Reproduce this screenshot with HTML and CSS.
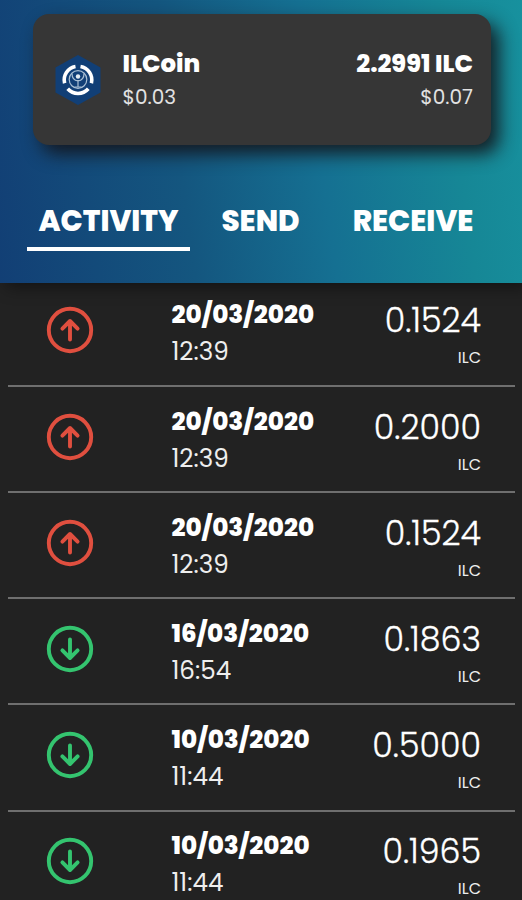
FILE: index.html
```html
<!DOCTYPE html>
<html lang="en">

<head>
    <meta charset="UTF-8">
    <meta name="viewport" content="width=device-width, initial-scale=1">
    <title>ILCoin Wallet</title>
    <link rel="stylesheet" href="styles.css">
</head>

<body>
    <!-- arrow icons shared by the rows -->
    <svg class="sprite" width="0" height="0">
        <symbol id="arrow-up" viewBox="0 0 48 48">
            <circle cx="24" cy="24" r="21.2" />
            <path d="M24 33.6V15.5M16.4 22.6L24 15L31.6 22.6" />
        </symbol>
        <symbol id="arrow-down" viewBox="0 0 48 48">
            <circle cx="24" cy="24" r="21.2" />
            <path d="M24 14.4V32.5M16.4 25.4L24 33L31.6 25.4" />
        </symbol>
    </svg>

    <header class="header">
        <div class="card">
            <svg class="coin-logo" viewBox="0 0 46 50">
                <path class="coin-hex" d="M23 0L45.5 12.5V37.5L23 50L.5 37.5V12.5Z" />
                <g class="coin-ring">
                    <path d="M9.6 28.3A13.6 13.6 0 0 1 20.5 11.6" />
                    <path d="M25.5 11.6A13.6 13.6 0 0 1 36.4 28.3" />
                    <path d="M12.7 33.8A13.6 13.6 0 0 0 33.3 33.8" />
                </g>
                <circle class="coin-line" cx="23" cy="24.5" r="8.8" />
                <circle class="coin-dot" cx="23" cy="21.5" r="2.2" />
                <path class="coin-line" d="M17 18.5C17 23 19.5 25.5 23 26C26.5 25.5 29 23 29 18.5M23 25V32M19.5 32H26.5" />
            </svg>
            <div class="coin">
                <div class="coin-name">ILCoin</div>
                <div class="coin-price">$0.03</div>
            </div>
            <div class="balance">
                <div class="coin-name">2.2991 ILC</div>
                <div class="coin-price">$0.07</div>
            </div>
        </div>
        <nav class="tabs">
            <a class="tab tab-activity active">ACTIVITY</a>
            <a class="tab tab-send">SEND</a>
            <a class="tab tab-receive">RECEIVE</a>
        </nav>
    </header>

    <main class="list">
        <div class="row">
            <svg class="arrow sent"><use href="#arrow-up" /></svg>
            <div class="when">
                <div class="date">20/03/2020</div>
                <div class="time">12:39</div>
            </div>
            <div class="value">
                <div class="amount">0.1524</div>
                <div class="unit">ILC</div>
            </div>
        </div>
        <div class="row">
            <svg class="arrow sent"><use href="#arrow-up" /></svg>
            <div class="when">
                <div class="date">20/03/2020</div>
                <div class="time">12:39</div>
            </div>
            <div class="value">
                <div class="amount">0.2000</div>
                <div class="unit">ILC</div>
            </div>
        </div>
        <div class="row">
            <svg class="arrow sent"><use href="#arrow-up" /></svg>
            <div class="when">
                <div class="date">20/03/2020</div>
                <div class="time">12:39</div>
            </div>
            <div class="value">
                <div class="amount">0.1524</div>
                <div class="unit">ILC</div>
            </div>
        </div>
        <div class="row">
            <svg class="arrow received"><use href="#arrow-down" /></svg>
            <div class="when">
                <div class="date">16/03/2020</div>
                <div class="time">16:54</div>
            </div>
            <div class="value">
                <div class="amount">0.1863</div>
                <div class="unit">ILC</div>
            </div>
        </div>
        <div class="row">
            <svg class="arrow received"><use href="#arrow-down" /></svg>
            <div class="when">
                <div class="date">10/03/2020</div>
                <div class="time">11:44</div>
            </div>
            <div class="value">
                <div class="amount">0.5000</div>
                <div class="unit">ILC</div>
            </div>
        </div>
        <div class="row">
            <svg class="arrow received"><use href="#arrow-down" /></svg>
            <div class="when">
                <div class="date">10/03/2020</div>
                <div class="time">11:44</div>
            </div>
            <div class="value">
                <div class="amount">0.1965</div>
                <div class="unit">ILC</div>
            </div>
        </div>
    </main>
</body>

</html>
```
FILE: styles.css
```css
* {
    box-sizing: border-box;
}

body {
    margin: 0;
    height: 900px;
    overflow: hidden;
    background: #222222;
    color: #ffffff;
    font-family: Poppins, Inter, sans-serif;
}

.sprite {
    display: block;
}

.header {
    position: relative;
    z-index: 1;
    height: 283px;
    padding: 14px 31px 0 33px;
    background: linear-gradient(82deg, #123f75 0%, #14567f 35%, #157092 60%, #168796 85%, #17919e 100%);
    box-shadow: 6px 4px 16px rgba(0, 0, 0, 0.45);
}

.card {
    display: flex;
    height: 131px;
    padding: 33px 18px 0 22px;
    border-radius: 16px;
    background: #363636;
    box-shadow: 8px 9px 18px rgba(20, 20, 25, 0.9);
}

.coin-logo {
    width: 46px;
    height: 50px;
    margin-top: 8px;
}

.coin-hex {
    fill: #113f76;
}

.coin-ring {
    fill: none;
    stroke: #ffffff;
    stroke-width: 3.6;
}

.coin-line {
    fill: none;
    stroke: #a9bfd4;
    stroke-width: 1.2;
}

.coin-dot {
    fill: #e4ecf3;
}

.coin {
    margin-left: 21.5px;
}

.balance {
    margin-left: auto;
    text-align: right;
}

.coin-name {
    font-size: 24.4px;
    line-height: 34px;
    font-weight: 800;
    white-space: nowrap;
}

.coin-price {
    font-size: 20px;
    line-height: 32px;
    color: #e2e2e2;
}

.tabs {
    display: flex;
    margin: 49px 0 0 -6px;
}

.tab {
    height: 57px;
    font-size: 29.3px;
    line-height: 53px;
    font-weight: 800;
    text-align: center;
    white-space: nowrap;
}

.tab-activity {
    width: 163px;
}

.tab-send {
    width: 79px;
    margin-left: 31px;
}

.tab-receive {
    width: 121px;
    margin-left: 52.5px;
}

.tab.active {
    border-bottom: 4px solid #ffffff;
}

.list {
    margin: -2.2px 7px 0 8px;
}

.row {
    display: flex;
    height: 106.15px;
    padding: 16.6px 34px 0 38px;
    border-bottom: 2px solid #6f6f6f;
}

.row:last-child {
    border-bottom: none;
}

.arrow {
    width: 48px;
    height: 48px;
    margin-top: 9px;
    fill: none;
    stroke-width: 3.9;
    stroke-linecap: round;
    stroke-linejoin: round;
}

.sent {
    stroke: #e04f3f;
}

.received {
    stroke: #34c46f;
}

.when {
    margin-left: 77.5px;
}

.date {
    font-size: 24.6px;
    line-height: 36px;
    font-weight: 800;
}

.time {
    font-size: 24.6px;
    line-height: 38px;
    color: #eeeeee;
}

.value {
    margin-left: auto;
    padding-top: 2px;
    text-align: right;
}

.amount {
    font-size: 33.3px;
    line-height: 44px;
    font-weight: 300;
    -webkit-text-stroke: 0.3px #ffffff;
}

.unit {
    font-size: 16px;
    line-height: 30px;
    color: #eeeeee;
}
```
